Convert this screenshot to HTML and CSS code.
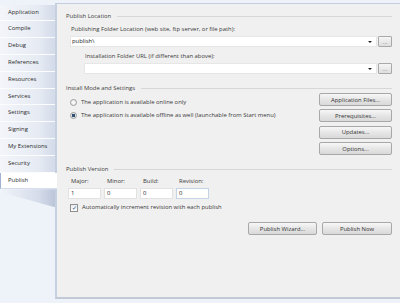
FILE: index.html
```html
<!DOCTYPE html>
<html lang="en">
<head>
  <meta charset="UTF-8" />
  <title>Publish</title>
  <link rel="stylesheet" href="styles.css">
</head>
<body>
  <div class="window">
    <!-- Left tab strip -->
    <div class="tabs">
      <div class="tab">Application</div>
      <div class="tab">Compile</div>
      <div class="tab">Debug</div>
      <div class="tab">References</div>
      <div class="tab">Resources</div>
      <div class="tab">Services</div>
      <div class="tab">Settings</div>
      <div class="tab">Signing</div>
      <div class="tab">My Extensions</div>
      <div class="tab">Security</div>
      <div class="tab active">Publish</div>
      <div class="wedge"></div>
    </div>

    <!-- Publish page -->
    <div class="panel">
      <div class="group-title first">Publish Location</div>
      <div class="label">Publishing Folder Location (web site, ftp server, or file path):</div>
      <div class="combo-row">
        <div class="combo"><span>publish\</span><span class="arrow"></span></div>
        <button class="browse">...</button>
      </div>
      <div class="label indent">Installation Folder URL (if different than above):</div>
      <div class="combo-row indent">
        <div class="combo"><span></span><span class="arrow"></span></div>
        <button class="browse">...</button>
      </div>

      <div class="group-title">Install Mode and Settings</div>
      <div class="install">
        <div class="options">
          <div class="option"><span class="radio"></span>The application is available online only</div>
          <div class="option"><span class="radio checked"></span>The application is available offline as well (launchable from Start menu)</div>
        </div>
        <div class="side-buttons">
          <button class="btn">Application Files...</button>
          <button class="btn">Prerequisites...</button>
          <button class="btn">Updates...</button>
          <button class="btn">Options...</button>
        </div>
      </div>

      <div class="group-title">Publish Version</div>
      <div class="version">
        <div class="field"><div class="field-label">Major:</div><div class="box">1</div></div>
        <div class="field"><div class="field-label">Minor:</div><div class="box">0</div></div>
        <div class="field"><div class="field-label">Build:</div><div class="box">0</div></div>
        <div class="field"><div class="field-label">Revision:</div><div class="box focus">0</div></div>
      </div>
      <div class="check"><span class="checkbox">&#10003;</span>Automatically increment revision with each publish</div>

      <div class="actions">
        <button class="btn wizard">Publish Wizard...</button>
        <button class="btn now">Publish Now</button>
      </div>
    </div>
  </div>
</body>
</html>
```

FILE: styles.css
```css
body { margin: 0; background: #eef2f9; font-family: "Open Sans", sans-serif; font-size: 5.9px; line-height: 9px; color: #3a3a3a; }
.window { display: flex; height: 303px; }
button { font-family: inherit; font-size: inherit; color: #333; padding: 0; }

/* Tab strip */
.tabs { width: 55px; padding-top: 4.6px; display: flex; flex-direction: column; }
.tab { height: 15.8px; line-height: 15.8px; padding-left: 8px; border-bottom: 1px solid #fbfcfe; background: linear-gradient(to right, #f3f5fa, #e6ebf3 70%, #d3dae8); color: #2b2b2b; white-space: nowrap; }
.tab.active { background: #fff; margin-right: -2px; position: relative; z-index: 1; border-left: 1px solid #9fb2d4; padding-left: 7px; border-bottom: 1px solid #d6deeb; }
.wedge { height: 18px; background: linear-gradient(to right, #f1f4f9, #d5dcea 70%, #bcc6da); clip-path: polygon(0 0, 100% 0, 100% 100%, 0 15%); }

/* Main page */
.panel { flex: 1; margin-top: 3px; height: 296px; box-sizing: border-box; background: #f0f0f0; border-top: 1px solid #c3cddf; border-left: 2px solid #c7d0e0; border-bottom: 2px solid #c2cad8; padding: 0 8px 0 9px; }
.group-title { display: flex; align-items: center; margin-top: 10px; color: #3c3c3c; }
.group-title.first { margin-top: 8px; }
.group-title::after { content: ""; flex: 1; border-top: 1px solid #d7d7d7; margin-left: 6px; }
.label { margin-top: 4px; padding-left: 5px; white-space: nowrap; }
.label.indent { margin-top: 5px; padding-left: 19px; }
.combo-row { display: flex; margin-top: 2px; padding-left: 4px; gap: 1px; }
.combo-row.indent { padding-left: 18px; }
.combo { flex: 1; height: 11px; box-sizing: border-box; background: #fff; border: 1px solid #e6e6e6; display: flex; align-items: center; justify-content: space-between; padding: 0 4px 0 1px; color: #222; }
.arrow { width: 0; height: 0; border-left: 2px solid transparent; border-right: 2px solid transparent; border-top: 2px solid #222; }
.browse { width: 14px; height: 11px; border: 1px solid #a9a9a9; border-radius: 1px; background: linear-gradient(#f6f6f6, #dedede); line-height: 6px; color: #777; }

.install { display: flex; justify-content: space-between; }
.options { padding-top: 5px; padding-left: 4px; display: flex; flex-direction: column; gap: 4px; }
.option { display: flex; align-items: center; white-space: nowrap; }
.radio { width: 5px; height: 5px; border: 1px solid #9c9c9c; border-radius: 50%; background: radial-gradient(#fff, #e3e3e3); margin-right: 4px; box-sizing: content-box; }
.radio.checked { background: radial-gradient(circle, #2f4f6f 0 1.4px, #dfe6ee 1.8px); }
.side-buttons { display: flex; flex-direction: column; gap: 3.4px; }
.btn { height: 13px; border: 1px solid #a8a8a8; border-radius: 2px; background: linear-gradient(#f7f7f7, #e6e6e6 50%, #d9d9d9); }
.side-buttons .btn { width: 73px; }

.version { display: flex; gap: 3px; margin-top: 3px; padding-left: 2px; }
.field { width: 33px; }
.field-label { padding-left: 3px; }
.box { margin-top: 2px; height: 11px; box-sizing: border-box; background: #fff; border: 1px solid #e2e2e2; padding-left: 2px; line-height: 9px; color: #222; }
.box.focus { border-color: #c5d3e6; }
.check { display: flex; align-items: center; margin-top: 4px; padding-left: 4px; white-space: nowrap; }
.checkbox { width: 6px; height: 6px; border: 1px solid #8f8f8f; background: linear-gradient(#e9eef5, #fff); margin-right: 4px; font-size: 6px; line-height: 6px; text-align: center; color: #2a4a7a; }

.actions { display: flex; justify-content: flex-end; gap: 5px; margin-top: 10px; }
.actions .wizard { width: 69px; }
.actions .now { width: 70px; }
```
